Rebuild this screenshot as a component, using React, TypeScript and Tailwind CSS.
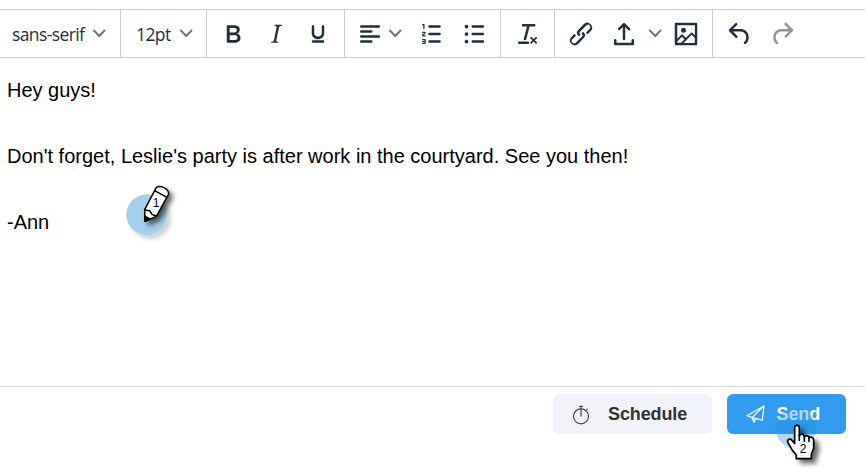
import React from 'react';

const paths = {
  bold: 'M7.8 19c-.3 0-.5 0-.6-.2l-.2-.5V5.7c0-.2 0-.4.2-.5l.6-.2h5c1.5 0 2.7.3 3.5 1 .7.6 1.1 1.4 1.1 2.5a3 3 0 0 1-.6 1.9c-.4.6-1 1-1.6 1.2.4.1.9.3 1.3.6s.8.7 1 1.2c.4.4.5 1 .5 1.6 0 1.3-.4 2.3-1.3 3-.8.7-2.1 1-3.8 1H7.8Zm5-8.3c.6 0 1.2-.1 1.6-.5.4-.3.6-.7.6-1.3 0-1.1-.8-1.7-2.3-1.7H9.3v3.5h3.4Zm.5 6c.7 0 1.3-.1 1.7-.4.4-.4.6-.9.6-1.5s-.2-1-.7-1.4c-.4-.3-1-.4-2-.4H9.4v3.8h4Z',
  italic: 'm16.7 4.7-.1.9h-.3c-.6 0-1 0-1.4.3-.3.3-.4.6-.5 1.1l-2.1 9.8v.6c0 .5.4.8 1.4.8h.2l-.2.8H8l.2-.8h.2c1.1 0 1.8-.5 2-1.5l2-9.8.1-.5c0-.6-.4-.8-1.4-.8h-.3l.2-.9h5.8Z',
  underline: 'M16 5c.6 0 1 .4 1 1v5.5a4 4 0 0 1-.4 1.8l-1 1.4a5.3 5.3 0 0 1-5.5 1 5 5 0 0 1-1.6-1c-.5-.4-.8-.9-1.1-1.4a4 4 0 0 1-.4-1.8V6c0-.6.4-1 1-1s1 .4 1 1v5.5c0 .3 0 .6.2 1l.6.7a3.3 3.3 0 0 0 2.2.8 3.4 3.4 0 0 0 2.2-.8c.3-.2.4-.5.6-.8l.2-.9V6c0-.6.4-1 1-1ZM8 17h8c.6 0 1 .4 1 1s-.4 1-1 1H8a1 1 0 0 1 0-2Z',
  alignLeft: 'M5 5h14c.6 0 1 .4 1 1s-.4 1-1 1H5a1 1 0 1 1 0-2Zm0 4h8c.6 0 1 .4 1 1s-.4 1-1 1H5a1 1 0 1 1 0-2Zm0 8h8c.6 0 1 .4 1 1s-.4 1-1 1H5a1 1 0 0 1 0-2Zm0-4h14c.6 0 1 .4 1 1s-.4 1-1 1H5a1 1 0 0 1 0-2Z',
  ordered: 'M10 17h8c.6 0 1 .4 1 1s-.4 1-1 1h-8a1 1 0 0 1 0-2Zm0-6h8c.6 0 1 .4 1 1s-.4 1-1 1h-8a1 1 0 0 1 0-2Zm0-6h8c.6 0 1 .4 1 1s-.4 1-1 1h-8a1 1 0 1 1 0-2ZM6 4v3.5c0 .3-.2.5-.5.5a.5.5 0 0 1-.5-.5V5h-.5a.5.5 0 0 1 0-1H6Zm-1 8.8.2.2h1.3c.3 0 .5.2.5.5s-.2.5-.5.5H4.9a1 1 0 0 1-.9-1V13c0-.4.3-.8.6-1l1.2-.4.2-.3a.2.2 0 0 0-.2-.2H4.5a.5.5 0 0 1-.5-.5c0-.3.2-.5.5-.5h1.6c.5 0 .9.4.9 1v.1c0 .4-.3.8-.6 1l-1.2.4-.2.3ZM7 17v2c0 .6-.4 1-1 1H4.5a.5.5 0 0 1 0-1h1.2c.2 0 .3-.1.3-.3 0-.2-.1-.3-.3-.3H4.4a.4.4 0 1 1 0-.8h1.3c.2 0 .3-.1.3-.3 0-.2-.1-.3-.3-.3H4.5a.5.5 0 1 1 0-1H6c.6 0 1 .4 1 1Z',
  unordered: 'M11 5h8c.6 0 1 .4 1 1s-.4 1-1 1h-8a1 1 0 0 1 0-2Zm0 6h8c.6 0 1 .4 1 1s-.4 1-1 1h-8a1 1 0 0 1 0-2Zm0 6h8c.6 0 1 .4 1 1s-.4 1-1 1h-8a1 1 0 0 1 0-2ZM4.5 6a1.5 1.5 0 1 1 3 0 1.5 1.5 0 0 1-3 0Zm0 6a1.5 1.5 0 1 1 3 0 1.5 1.5 0 0 1-3 0Zm0 6a1.5 1.5 0 1 1 3 0 1.5 1.5 0 0 1-3 0Z',
  clear: 'M13.2 6a1 1 0 0 1 0 .2l-2.6 10a1 1 0 0 1-1 .8h-.2a.8.8 0 0 1-.8-1l2.6-10H8a1 1 0 1 1 0-2h9a1 1 0 0 1 0 2h-3.8ZM5 18h7a1 1 0 0 1 0 2H5a1 1 0 0 1 0-2Zm13 1.5L16.5 18 15 19.5a.7.7 0 0 1-1-1l1.5-1.5-1.5-1.5a.7.7 0 0 1 1-1l1.5 1.5 1.5-1.5a.7.7 0 0 1 1 1L17.5 17l1.5 1.5a.7.7 0 0 1-1 1Z',
  link: 'M6.2 12.3a1 1 0 0 1 1.4 1.4l-2 2a2 2 0 1 0 2.6 2.8l4.8-4.8a1 1 0 0 0 0-1.4 1 1 0 1 1 1.4-1.3 2.9 2.9 0 0 1 0 4L9.6 20a3.9 3.9 0 0 1-5.5-5.5l2-2Zm11.6-.6a1 1 0 0 1-1.4-1.4l2-2a2 2 0 1 0-2.6-2.8L11 10.3a1 1 0 0 0 0 1.4A1 1 0 1 1 9.6 13a2.9 2.9 0 0 1 0-4L14.4 4a3.9 3.9 0 0 1 5.5 5.5l-2 2Z',
  upload: 'M18 19v-2a1 1 0 0 1 2 0v3c0 .6-.4 1-1 1H5a1 1 0 0 1-1-1v-3a1 1 0 0 1 2 0v2h12ZM11 6.4 8.7 8.7a1 1 0 0 1-1.4-1.4l4-4a1 1 0 0 1 1.4 0l4 4a1 1 0 1 1-1.4 1.4L13 6.4V16a1 1 0 0 1-2 0V6.4Z',
  image: 'm5 15.7 3.3-3.2c.3-.3.7-.3 1 0L12 15l4.1-4c.3-.4.8-.4 1 0l2 1.9V5H5v10.7ZM5 18V19h3l2.8-2.9-2-2L5 17.9Zm14-3-2.5-2.4-6.4 6.5H19v-4ZM4 3h16c.6 0 1 .4 1 1v16c0 .6-.4 1-1 1H4a1 1 0 0 1-1-1V4c0-.6.4-1 1-1Zm6 8a2 2 0 1 0 0-4 2 2 0 0 0 0 4Z',
  undo: 'M6.4 8H12c3.7 0 6.2 2 6.8 5.1.6 2.7-.4 5.6-2.3 6.8a1 1 0 0 1-1-1.8c1.1-.6 1.8-2.7 1.4-4.6-.5-2.1-2.1-3.5-4.9-3.5H6.4l3.3 3.3a1 1 0 1 1-1.4 1.4l-5-5a1 1 0 0 1 0-1.4l5-5a1 1 0 0 1 1.4 1.4L6.4 8Z',
  redo: 'M17.6 10H12c-2.8 0-4.4 1.4-4.9 3.5-.4 2 .3 4 1.4 4.6a1 1 0 1 1-1 1.8c-2-1.2-2.9-4.1-2.3-6.8.6-3 3-5.1 6.8-5.1h5.6l-3.3-3.3a1 1 0 1 1 1.4-1.4l5 5a1 1 0 0 1 0 1.4l-5 5a1 1 0 0 1-1.4-1.4l3.3-3.3Z',
};

function Icon({ name, className = '' }: { name: keyof typeof paths; className?: string }) {
  return (
    <svg viewBox="0 0 24 24" className={`size-[30px] shrink-0 fill-[#222f3e] ${className}`}>
      <path fillRule="evenodd" d={paths[name]} />
    </svg>
  );
}

function Chevron({ className = '' }: { className?: string }) {
  return (
    <svg viewBox="0 0 10 10" className={`size-[12.5px] shrink-0 fill-[#6b7480] ${className}`}>
      <path d="M8.7 2.2c.3-.3.8-.3 1 0 .4.4.4.9 0 1.2L5.7 7.8c-.3.3-.9.3-1.2 0L.2 3.4a.8.8 0 0 1 0-1.2c.3-.3.8-.3 1.1 0L5 6l3.7-3.8Z" />
    </svg>
  );
}

function Group({ className, children }: { className: string; children: React.ReactNode }) {
  return <div className={`flex h-full shrink-0 items-center border-r border-[#ccc] ${className}`}>{children}</div>;
}

function PencilMarker() {
  return (
    <svg viewBox="0 0 240 240" className="absolute left-[110px] top-[112px] size-20">
      <defs>
        <filter id="pencilShadow" x="-50%" y="-50%" width="200%" height="200%">
          <feDropShadow dx="11" dy="11" stdDeviation="8" floodColor="#000" floodOpacity="0.6" />
        </filter>
        <filter id="discShadow" x="-50%" y="-50%" width="200%" height="200%">
          <feDropShadow dx="12" dy="12" stdDeviation="7" floodColor="#000" floodOpacity="0.18" />
        </filter>
      </defs>
      <circle cx="110" cy="134" r="61" fill="#a6cfeb" filter="url(#discShadow)" />
      <g filter="url(#pencilShadow)" stroke="#000" strokeWidth="4.5" strokeLinejoin="round">
        <path d="M105 154 104 119 139 52Q148 47 162 53 176 60 176 72L139 139Z" fill="#fff" />
        <path d="M104 120 119 122 126 133 138 138M134 62 171 82" fill="none" />
        <path d="M105 154 105 139 119 146Z" fill="#000" />
      </g>
      <text x="138" y="110" textAnchor="middle" fontSize="36" className="font-['Liberation_Sans',Arial,sans-serif]">1</text>
    </svg>
  );
}

function HandMarker() {
  return (
    <svg viewBox="0 0 450 270" className="pointer-events-none absolute -top-[7px] right-0 h-[90px] w-[150px]">
      <defs>
        <filter id="handShadow" x="-50%" y="-50%" width="200%" height="200%">
          <feDropShadow dx="13" dy="12" stdDeviation="8" floodColor="#000" floodOpacity="0.6" />
        </filter>
      </defs>
      <circle cx="242" cy="144" r="61" fill="#2590da" fillOpacity="0.36" />
      <g filter="url(#handShadow)" stroke="#000" strokeWidth="5" strokeLinejoin="round" strokeLinecap="round">
        <path
          d="M244 236V225L231 209 219 188C215 179 224 174 231 181L239 190V143C239 134 253 134 253 143V169C254 160 268 161 268 171 270 164 282 166 282 174 286 169 296 173 296 181V205L289 222V236Z"
          fill="#fff"
        />
        <path d="M253 166V181M268 171V184M282 174V184" fill="none" />
      </g>
      <text x="264" y="218" textAnchor="middle" fontSize="36" className="font-['Liberation_Sans',Arial,sans-serif] font-normal">2</text>
    </svg>
  );
}

export default function App() {
  return (
    <div className="flex h-[470px] w-[865px] flex-col overflow-hidden bg-white pt-[9px] font-['Liberation_Sans',Arial,sans-serif]">
      <div className="flex h-[49px] shrink-0 items-center border-y border-[#ccc] font-['Open_Sans','Noto_Sans',sans-serif] text-[17.5px] text-[#222f3e]">
        <Group className="w-[121px] pl-3">
          <span className="w-[81px] whitespace-nowrap pt-0.5 tracking-[-0.6px]">sans-serif</span>
          <Chevron />
        </Group>
        <Group className="w-[86px] pl-[15px]">
          <span className="w-11 whitespace-nowrap pt-0.5 tracking-[-0.6px]">12pt</span>
          <Chevron />
        </Group>
        <Group className="w-[138px] gap-[12.5px] pl-[11px]">
          <Icon name="bold" />
          <Icon name="italic" />
          <Icon name="underline" />
        </Group>
        <Group className="w-[156px] pl-[10px]">
          <Icon name="alignLeft" />
          <Chevron className="ml-[4px]" />
          <Icon name="ordered" className="ml-[15.5px]" />
          <Icon name="unordered" className="ml-[12px]" />
        </Group>
        <Group className="w-[54px] pl-3">
          <Icon name="clear" />
        </Group>
        <Group className="w-[158px] pl-[11px]">
          <Icon name="link" />
          <Icon name="upload" className="ml-[13px]" />
          <Chevron className="ml-[10px]" />
          <Icon name="image" className="ml-[9.5px]" />
        </Group>
        <div className="flex items-center gap-3 pl-3">
          <Icon name="undo" />
          <Icon name="redo" className="opacity-50" />
        </div>
      </div>

      <div className="relative h-[328px] shrink-0 pl-[7px] pt-4 text-[20px] leading-[33px] text-black">
        <p>Hey guys!</p>
        <p className="mt-[33px] whitespace-nowrap">Don't forget, Leslie's party is after work in the courtyard. See you then!</p>
        <p className="mt-[33px]">-Ann</p>
        <PencilMarker />
      </div>

      <div className="relative flex flex-1 items-start justify-end gap-[15px] border-t border-[#d0d7df] pr-[19px] pt-[7px] text-[18px] font-bold tracking-[-0.12px]">
        <button className="flex h-10 w-[159px] items-center rounded-md bg-[#f2f3f8] pl-[19px] text-[#333]">
          <svg viewBox="0 0 18 20" className="mt-px h-5 w-[18px] fill-none stroke-[#454b52]" strokeWidth="1.2">
            <circle cx="9" cy="11.3" r="7.5" />
            <path d="M9 2v9.5M7 1.3h4M14.3 5.2l1.2-1.2" />
          </svg>
          <span className="ml-[18px]">Schedule</span>
        </button>
        <button className="flex h-10 w-[119px] items-center rounded-md bg-[#339cf0] pl-[19px] text-white">
          <svg viewBox="0 0 20 18" className="h-[18px] w-5 fill-none stroke-white" strokeWidth="1.2" strokeLinejoin="round">
            <path d="M18 1 1 10.8 6 12.6 16.2 15.2 18 1 6 12.6 8 17.2 9.6 13.6" />
          </svg>
          <span className="ml-[10.5px]">Send</span>
        </button>
        <HandMarker />
      </div>
    </div>
  );
}
